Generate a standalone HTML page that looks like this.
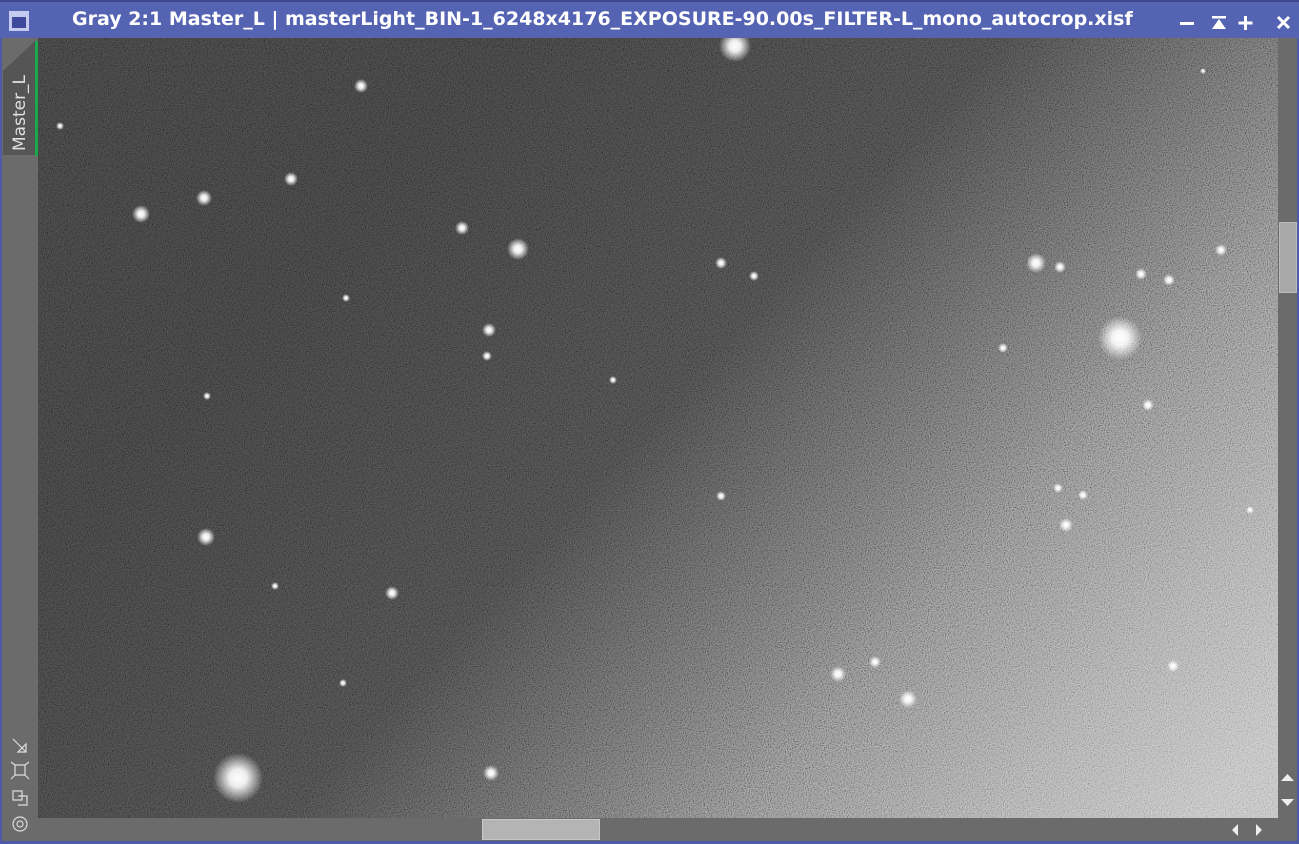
<!DOCTYPE html>
<html><head><meta charset="utf-8"><style>
html,body{margin:0;padding:0;width:1299px;height:844px;overflow:hidden;background:#4d5aa8;font-family:"Liberation Sans","DejaVu Sans",sans-serif}
#title{position:absolute;left:0;top:0;width:1299px;height:38px;background:#5563b3;border-top:2px solid #3d4890;box-sizing:border-box}
#title .t{position:absolute;left:72px;top:6px;color:#fff;font-weight:bold;font-size:19px;font-family:"DejaVu Sans",sans-serif;white-space:nowrap}
#ico{position:absolute;left:9px;top:9px;width:20px;height:20px;background:#c5cbf0;box-sizing:border-box;border:3px solid #c5cbf0;}
#ico:after{content:"";position:absolute;left:0;top:3px;width:14px;height:11px;background:#3f4a9c}
#left{position:absolute;left:2px;top:38px;width:36px;height:803px;background:#6b6b6b}
#tab{position:absolute;left:3px;top:41px;width:32px;height:114px;background:#555;clip-path:polygon(0 30px,32px 0,32px 114px,0 114px)}
#green{position:absolute;left:35px;top:41px;width:3px;height:115px;background:#1aa84c}
#tabtxt{position:absolute;left:10px;top:151px;transform-origin:0 0;transform:rotate(-90deg);color:#e0e0e0;font-size:17px;font-family:"DejaVu Sans",sans-serif;white-space:nowrap}
#img{position:absolute;left:38px;top:38px;width:1240px;height:780px}
#vs{position:absolute;left:1278px;top:38px;width:19px;height:780px;background:#6b6b6b}
#hs{position:absolute;left:38px;top:818px;width:1259px;height:23px;background:#6b6b6b}
#bot{position:absolute;left:0;top:841px;width:1299px;height:3px;background:#4d5aa8}
#rb{position:absolute;left:1297px;top:38px;width:2px;height:806px;background:#4d5aa8}
#lb{position:absolute;left:0;top:38px;width:2px;height:806px;background:#4d5aa8}
</style></head><body>
<div id="title"><div id="ico"></div><div class="t">Gray 2:1 Master_L | masterLight_BIN-1_6248x4176_EXPOSURE-90.00s_FILTER-L_mono_autocrop.xisf</div>
<svg style="position:absolute;left:1175px;top:8px" width="120" height="24">
<rect x="5" y="12" width="14" height="3" fill="#fff"/>
<rect x="37" y="6" width="14" height="2.5" fill="#fff"/><polygon points="44,9 37,19 51,19" fill="#fff"/>
<rect x="69" y="6" width="3" height="14" fill="#fff"/><rect x="63.5" y="11.5" width="14" height="3" fill="#fff"/>
<path d="M103 7 L114 18 M114 7 L103 18" stroke="#fff" stroke-width="3"/>
</svg></div>
<div id="lb"></div><div id="rb"></div>
<div id="left"></div>
<div id="tab"></div><div id="green"></div>
<div id="tabtxt">Master_L</div>
<svg style="position:absolute;left:8px;top:735px" width="24" height="100" fill="none" stroke="#ddd" stroke-width="1.2">
<path d="M5 4 L18 17 M18 9 L18 17 L10 17 Z"/>
<path d="M7 30 H17 V40 H7 Z M3 27 L7 30 M21 27 L17 30 M3 44 L7 40 M21 44 L17 40"/>
<path d="M5 56 H14 V65 H5 Z M10 61 H19 V70 H10"/>
<circle cx="12" cy="89" r="7"/><circle cx="12" cy="89" r="3"/>
</svg>
<svg id="img" width="1240" height="780" viewBox="0 0 1240 780">
<defs>
<linearGradient id="lin" x1="420" y1="60" x2="1180" y2="760" gradientUnits="userSpaceOnUse">
<stop offset="0" stop-color="#3c3c3c"/><stop offset="0.35" stop-color="#454545"/><stop offset="0.62" stop-color="#767676"/><stop offset="0.85" stop-color="#a4a4a4"/><stop offset="1" stop-color="#bababa"/></linearGradient>
<radialGradient id="s"><stop offset="0" stop-color="#fff"/><stop offset="0.35" stop-color="#fff" stop-opacity="0.9"/><stop offset="1" stop-color="#fff" stop-opacity="0"/></radialGradient>
<filter id="n" x="0" y="0" width="100%" height="100%"><feTurbulence type="fractalNoise" baseFrequency="0.95" numOctaves="1" seed="3"/><feColorMatrix type="matrix" values="2 0 0 0 -0.5  2 0 0 0 -0.5  2 0 0 0 -0.5  0 0 0 0 1"/></filter>
</defs>
<rect width="1240" height="780" fill="url(#lin)"/>
<rect width="1240" height="780" filter="url(#n)" opacity="0.45" style="mix-blend-mode:overlay"/>
<g fill="url(#s)">
<circle cx="697" cy="8" r="16"/><circle cx="323" cy="48" r="7"/><circle cx="103" cy="176" r="9"/><circle cx="166" cy="160" r="8"/><circle cx="253" cy="141" r="7"/><circle cx="424" cy="190" r="7"/><circle cx="480" cy="211" r="11"/><circle cx="451" cy="292" r="7"/><circle cx="449" cy="318" r="5"/><circle cx="683" cy="225" r="6"/><circle cx="716" cy="238" r="5"/><circle cx="998" cy="225" r="10"/><circle cx="1022" cy="229" r="6"/><circle cx="1082" cy="300" r="22"/><circle cx="1103" cy="236" r="6"/><circle cx="1131" cy="242" r="6"/><circle cx="1183" cy="212" r="6"/><circle cx="168" cy="499" r="9"/><circle cx="354" cy="555" r="7"/><circle cx="200" cy="740" r="25"/><circle cx="453" cy="735" r="8"/><circle cx="800" cy="636" r="8"/><circle cx="837" cy="624" r="6"/><circle cx="870" cy="661" r="9"/><circle cx="1028" cy="487" r="7"/><circle cx="1135" cy="628" r="6"/><circle cx="683" cy="458" r="5"/><circle cx="575" cy="342" r="4"/><circle cx="169" cy="358" r="4"/><circle cx="308" cy="260" r="4"/><circle cx="237" cy="548" r="4"/><circle cx="305" cy="645" r="4"/><circle cx="22" cy="88" r="4"/><circle cx="965" cy="310" r="5"/><circle cx="1110" cy="367" r="6"/><circle cx="1020" cy="450" r="5"/><circle cx="1045" cy="457" r="5"/><circle cx="1212" cy="472" r="4"/><circle cx="1165" cy="33" r="3"/></g>
</svg>
<div id="vs"><div style="position:absolute;left:1px;top:184px;width:18px;height:71px;background:#a8a8a8;border:1px solid #bbb;box-sizing:border-box"></div>
<svg style="position:absolute;left:0;top:733px" width="19" height="45"><polygon points="9.5,3 3,10 16,10" fill="#eee"/><polygon points="9.5,35 3,28 16,28" fill="#eee"/></svg></div>
<div id="hs"><div style="position:absolute;left:444px;top:1px;width:118px;height:21px;background:#b4b4b4;border:1px solid #c8c8c8;box-sizing:border-box"></div>
<svg style="position:absolute;left:1190px;top:3px" width="40" height="18"><polygon points="10,3 4,9 10,15" fill="#eee"/><polygon points="28,3 34,9 28,15" fill="#eee"/></svg></div>
<div id="bot"></div>
</body></html>
